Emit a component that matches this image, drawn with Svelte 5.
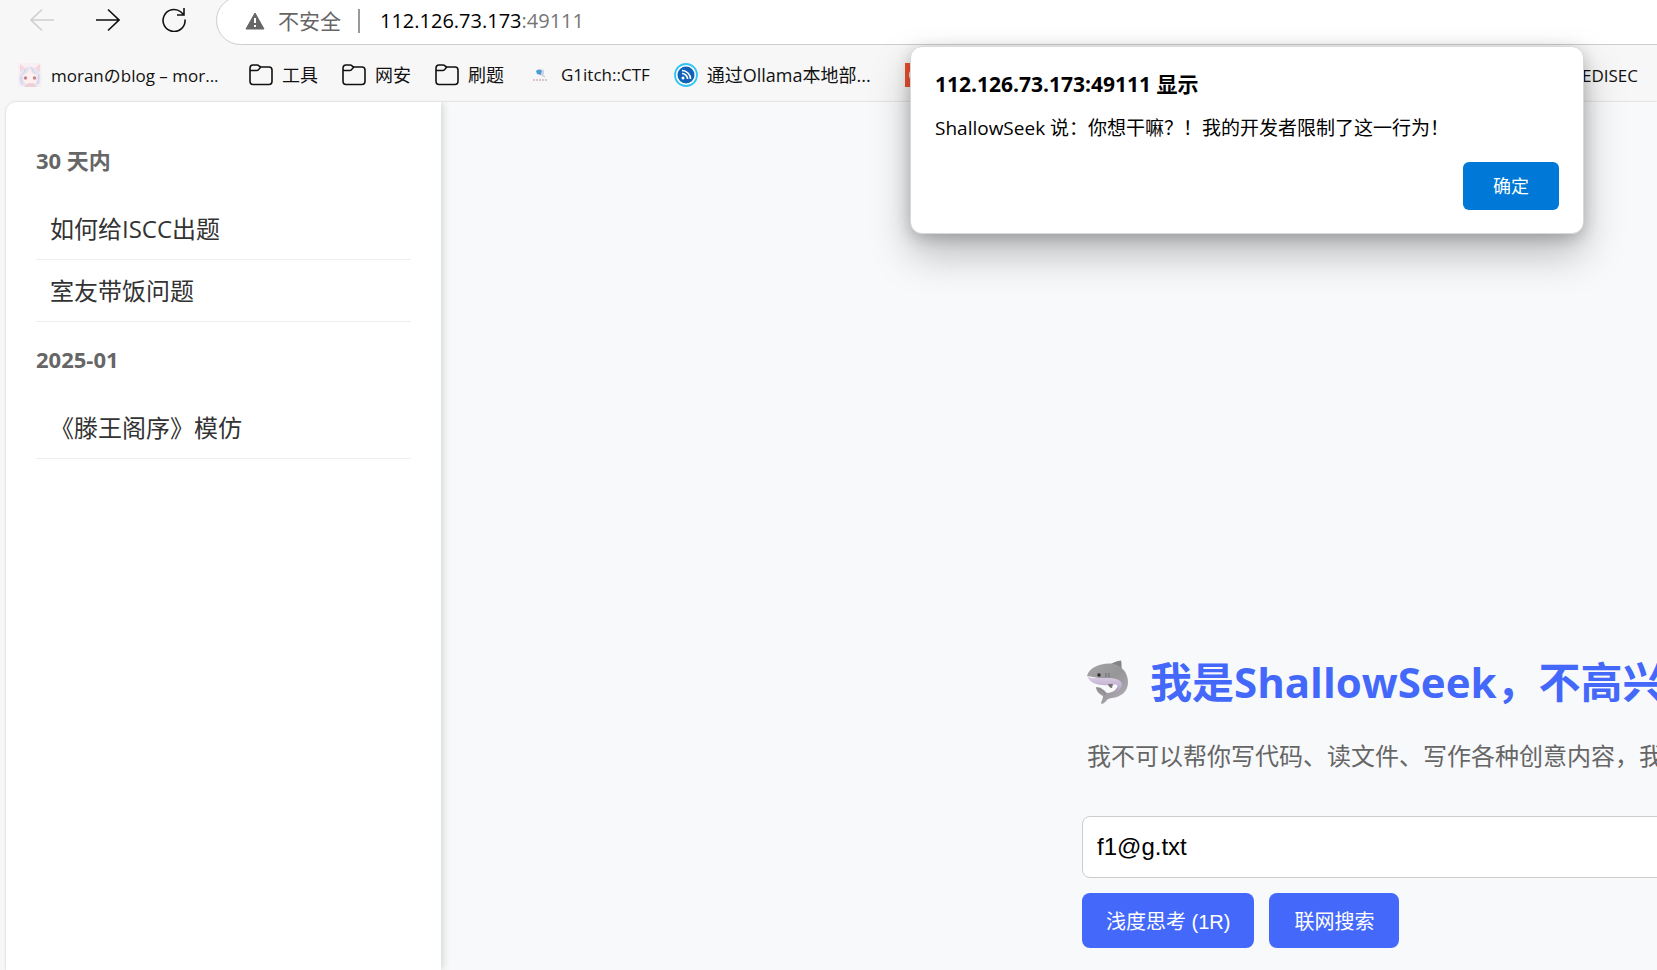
<script lang="ts">
	let message = $state('f1@g.txt');
	let dialogOpen = $state(true);

	const bookmarks = [
		{ label: 'moranのblog – mor...', icon: 'avatar', long: true, latin: true },
		{ label: '工具', icon: 'folder' },
		{ label: '网安', icon: 'folder' },
		{ label: '刷题', icon: 'folder' },
		{ label: 'G1itch::CTF', icon: 'glitch', latin: true },
		{ label: '通过Ollama本地部...', icon: 'feed', long: true },
		{ label: '', icon: 'red' }
	];

	const groups = [
		{ title: '30 天内', chats: ['如何给ISCC出题', '室友带饭问题'] },
		{ title: '2025-01', chats: ['《滕王阁序》模仿'] }
	];
</script>

<div class="browser">
	<header class="chrome">
		<div class="toolbar">
			<button class="toolbar__button" aria-label="Back" disabled>
				<svg width="24" height="24" viewBox="0 0 24 24"><path d="M24 12H1M12 1.500 1 12l11 10.500" /></svg>
			</button>
			<button class="toolbar__button" aria-label="Forward">
				<svg width="24" height="24" viewBox="0 0 24 24"><path d="M0 12h23M12 1.500 23 12 12 22.500" /></svg>
			</button>
			<button class="toolbar__button" aria-label="Reload">
				<svg width="24" height="24" viewBox="0 0 24 24"><path d="M23 11.500A11 11 0 1 1 19 4L22 7M22 0v7h-7" /></svg>
			</button>
			<div class="address">
				<svg class="address__warn" width="20" height="18" viewBox="0 0 20 18">
					<path d="M10 1 19 17H1z" fill="#666" stroke="#666" stroke-linejoin="round" />
					<path d="M10 6v5M10 13v2" stroke="#fff" stroke-width="2" />
				</svg>
				<span class="address__status">不安全</span>
				<span class="address__divider"></span>
				<span class="address__url">112.126.73.173<span class="address__port">:49111</span></span>
			</div>
		</div>

		<nav class="bookmarks">
			{#each bookmarks as item}
				<a href="#bookmark" class="bookmark" class:bookmark--latin={item.latin} aria-label={item.label || 'Bookmark'}>
					{#if item.icon === 'folder'}
						<svg width="24" height="24" viewBox="0 0 24 24" fill="none" stroke="#111" stroke-width="1.600">
							<path d="M1 5.500C1 3 2 2 4 2h4c2 0 2.500 2 4 2h8c2 0 3 1 3 3v11c0 2.500-1 3.500-3 3.500H4c-2 0-3-1-3-3.500z" />
							<path d="M1 7.500h7c2 0 2.500-3 4-3.500" />
						</svg>
					{:else if item.icon === 'avatar'}
						<svg width="24" height="24" viewBox="0 0 24 24">
							<path d="M0 0h24v24H0z" fill="#f9f0f4" />
							<path d="M1 20C0 10 4 4 12 4s12 6 10 16l-3 3H4z" fill="#e6e4f1" />
							<path d="M2 1l5 4-5 4zM22 1l-5 4 5 4z" fill="#f6d5df" />
							<path d="M5 12c4-1 6-4 7-7 1 4 3 6 7 7l-1 7c-3 4-9 4-12 0z" fill="#fdf0ef" />
							<path d="M8 5 5 12M13 4l4 7M3 13l1 8M21 12l-1 9" stroke="#d0d3ea" />
							<circle cx="7.500" cy="15" r="1.700" fill="#c98292" />
							<circle cx="16.500" cy="15" r="1.700" fill="#c98292" />
							<path d="M10 20h5l4 4H6z" fill="#eed0d9" />
						</svg>
					{:else if item.icon === 'glitch'}
						<svg width="24" height="24" viewBox="0 0 24 24">
							<path d="M8 8c2-2 5-2 6 0l-1 4-4-1z" fill="#4b9dd8" />
							<path d="M13 7c3 0 3 3 1 5l3 2" fill="none" stroke="#c8cbd6" stroke-width="1.500" />
							<path d="M5 17h14" stroke="#dcc3ca" stroke-width="2" stroke-dasharray="2 1" />
						</svg>
					{:else if item.icon === 'feed'}
						<svg width="24" height="24" viewBox="0 0 24 24" fill="none">
							<circle cx="12" cy="12" r="11" fill="#fff" stroke="#32c5f4" stroke-width="1.800" />
							<circle cx="12" cy="12" r="8.500" fill="#1261b8" />
							<circle cx="9" cy="15" r="1.500" fill="#fff" />
							<path d="M8 10.500a5.500 5.500 0 0 1 5.500 5.500M8 7.500a8.500 8.500 0 0 1 8.500 8.500" stroke="#fff" stroke-width="1.600" />
						</svg>
					{:else}
						<svg width="24" height="24" viewBox="0 0 24 24">
							<path d="M0 0h24v24H0z" fill="#f0502f" />
							<circle cx="12" cy="12" r="7" fill="none" stroke="#fff" stroke-width="2" />
						</svg>
					{/if}
					<span class="bookmark__label" class:bookmark__label--long={item.long}>{item.label}</span>
				</a>
			{/each}
			<a href="#bookmark" class="bookmark bookmark--latin bookmark--last">EDISEC</a>
		</nav>
	</header>

	<div class="page">
		<aside class="sidebar">
			{#each groups as group}
				<h3 class="sidebar__title">{group.title}</h3>
				<ul class="sidebar__list">
					{#each group.chats as chat}
						<li><a href="#chat" class="sidebar__link">{chat}</a></li>
					{/each}
				</ul>
			{/each}
		</aside>

		<main class="main">
			<div class="chat">
				<h1 class="chat__title">
					<svg width="44" height="44" viewBox="0 0 44 44" aria-hidden="true">
						<defs>
							<linearGradient id="skin" x1="0" y1="0" x2="1" y2="1">
								<stop offset="0" stop-color="#a5a3a5" />
								<stop offset="0.500" stop-color="#969597" />
								<stop offset="1" stop-color="#b5b0ba" />
							</linearGradient>
							<linearGradient id="belly" x1="0" y1="0" x2="0" y2="1">
								<stop offset="0" stop-color="#dccfe6" />
								<stop offset="1" stop-color="#b09bc2" />
							</linearGradient>
						</defs>
						<path d="M25 4c3-2 6-3 10-3.500 1 3 0 6 1 9z" fill="#858386" />
						<path d="M1 16C3 8 13 3 25 3.500 36 5 42 13 42 22c0 9-6 15-16 16-2 0-4 1-5 2l-3 3c-1 1-3 1-3 0 1-3 2-5 2-7-4-2-7-5-7-9 5 0 8 3 11 6 6 0 11-4 11-9 0-3-3-4-7-4z" fill="url(#skin)" />
						<path d="M1 16c2 2 6 2 10 2h13c7 0 12 3 12 7-1 4-4 7-8 8 4-3 5-6 3-8-2-1-4 0-8 0-9 1-19-1-22-9z" fill="url(#belly)" />
						<path d="M22 24h5l-1 4c-2 0-4-2-4-4z" fill="#77727b" />
						<path d="M20 13v4M23 13v4" stroke="#6f6d72" stroke-width="1" />
						<circle cx="13" cy="15" r="1.700" fill="#2e2a31" />
						<path d="M11 28c4 1 7 4 8 7" fill="none" stroke="#8a8490" />
					</svg>
					我是ShallowSeek，不高兴
				</h1>
				<p class="chat__intro">我不可以帮你写代码、读文件、写作各种创意内容，我</p>
				<input class="chat__input" type="text" aria-label="Message" bind:value={message} />
				<div class="chat__actions">
					<button class="chat__button">浅度思考 (1R)</button>
					<button class="chat__button">联网搜索</button>
				</div>
			</div>
		</main>
	</div>

	{#if dialogOpen}
		<div class="dialog" role="alertdialog" aria-labelledby="dialog-title" aria-describedby="dialog-text">
			<h2 id="dialog-title" class="dialog__title">112.126.73.173:49111 显示</h2>
			<p id="dialog-text" class="dialog__text">ShallowSeek 说：你想干嘛？！我的开发者限制了这一行为！</p>
			<button class="dialog__ok" onclick={() => (dialogOpen = false)}>确定</button>
		</div>
	{/if}
</div>

<style>
	:global(body) {
		margin: 0;
		background: #f7f7f7;
	}

	.browser {
		position: relative;
		display: flex;
		flex-direction: column;
		height: 100vh;
		overflow: hidden;
		font-family: 'Open Sans', 'Noto Sans CJK SC', sans-serif;
		background: #f7f7f7;
		color: #000;
	}

	.browser * {
		box-sizing: border-box;
	}

	svg {
		flex: none;
	}

	.chrome {
		flex: none;
		height: 102px;
	}

	.toolbar {
		display: flex;
		align-items: flex-start;
		height: 45px;
		padding-left: 30px;
	}

	.toolbar__button {
		display: flex;
		margin: 8px 42px 0 0;
		padding: 0;
		border: none;
		background: none;
	}

	.toolbar__button:nth-child(3) {
		margin-right: 30px;
	}

	.toolbar__button path {
		fill: none;
		stroke: #111;
		stroke-width: 1.6;
	}

	.toolbar__button:disabled path {
		stroke: #cfcfcf;
	}

	.address {
		display: flex;
		flex: 1;
		align-items: center;
		height: 49px;
		margin: -4px -30px 0 0;
		padding-left: 28px;
		border: 1px solid #cdcdcd;
		border-radius: 25px;
		background: #fff;
		white-space: nowrap;
	}

	.address__warn {
		margin-right: 13px;
	}

	.address__status {
		padding-bottom: 2px;
		font-size: 21px;
		color: #666;
	}

	.address__divider {
		width: 2px;
		height: 24px;
		margin: 0 20px 0 17px;
		background: #999;
	}

	.address__url {
		font-size: 20px;
	}

	.address__port {
		color: #767676;
	}

	.bookmarks {
		display: flex;
		gap: 24px;
		align-items: center;
		height: 56px;
		padding: 4px 19px 0 18px;
	}

	.bookmark {
		display: flex;
		gap: 9px;
		align-items: center;
		font-size: 18px;
		color: #111;
		text-decoration: none;
		white-space: nowrap;
	}

	.bookmark--latin {
		font-size: 17px;
	}

	.bookmark--last {
		margin-left: auto;
	}

	.bookmark__label {
		padding-bottom: 2px;
	}

	.bookmark__label--long {
		width: 174px;
	}

	.page {
		display: flex;
		flex: 1;
		margin-left: 6px;
		border-radius: 10px 0 0 0;
		overflow: hidden;
		background: #f8f9fb;
		box-shadow: 0 0 2px rgba(0, 0, 0, 0.25);
	}

	.sidebar {
		flex: none;
		width: 435px;
		padding: 21px 30px;
		background: #fff;
		box-shadow: 2px 0 8px rgba(0, 0, 0, 0.15);
	}

	.sidebar__title {
		margin: 23px 0 24px;
		font-size: 22px;
		line-height: 28px;
		font-weight: 700;
		color: #666;
	}

	.sidebar__list {
		margin: 0;
		padding: 0;
		list-style: none;
	}

	.sidebar__link {
		display: block;
		height: 62px;
		padding-left: 14px;
		border-bottom: 1px solid #eee;
		font-size: 24px;
		line-height: 61px;
		color: #333;
		text-decoration: none;
	}

	.main {
		display: flex;
		flex: 1;
		flex-direction: column;
		justify-content: flex-end;
		min-width: 0;
		padding-bottom: 22px;
	}

	.chat {
		width: 575px;
		margin-left: auto;
		white-space: nowrap;
	}

	.chat__title {
		display: flex;
		gap: 20px;
		align-items: center;
		margin: 0;
		padding-left: 4px;
		font-size: 42px;
		line-height: 60px;
		font-weight: 700;
		color: #4469fa;
	}

	.chat__intro {
		margin: 26px 0 42px;
		padding-left: 5px;
		font-size: 24px;
		line-height: 36px;
		color: #666;
	}

	.chat__input {
		display: block;
		width: calc(100% + 20px);
		height: 62px;
		padding: 0 14px;
		border: 1px solid #ccc;
		border-radius: 8px;
		outline: none;
		background: #fff;
		font-family: 'Liberation Sans', 'Noto Sans CJK SC', sans-serif;
		font-size: 24px;
		color: #000;
	}

	.chat__actions {
		display: flex;
		gap: 15px;
		margin-top: 15px;
	}

	.chat__button {
		min-width: 130px;
		height: 55px;
		padding: 0 24px;
		border: none;
		border-radius: 8px;
		background: #4469fa;
		font-family: 'Liberation Sans', 'Noto Sans CJK SC', sans-serif;
		font-size: 20px;
		color: #fff;
		cursor: pointer;
	}

	.dialog {
		position: absolute;
		top: 46px;
		right: 73px;
		display: flex;
		flex-direction: column;
		width: 674px;
		padding: 22px 24px 23px;
		border: 1px solid #d8d8d8;
		border-radius: 12px;
		background: #fff;
		box-shadow: 0 20px 40px rgba(0, 0, 0, 0.25), 0 4px 16px rgba(0, 0, 0, 0.2);
	}

	.dialog__title {
		margin: 0;
		font-size: 21px;
		line-height: 30px;
		font-weight: 700;
	}

	.dialog__text {
		margin: 14px 0 19px;
		font-size: 19px;
		line-height: 30px;
	}

	.dialog__ok {
		align-self: flex-end;
		width: 96px;
		height: 48px;
		padding: 0 0 2px;
		border: none;
		border-radius: 6px;
		background: #0078d7;
		font-family: inherit;
		font-size: 18px;
		color: #fff;
		cursor: pointer;
	}
</style>
